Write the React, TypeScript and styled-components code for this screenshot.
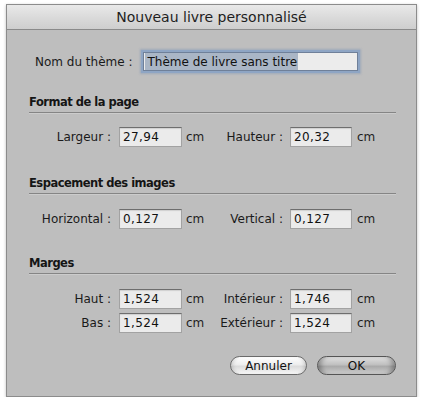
import React from "react";
import styled, { createGlobalStyle } from "styled-components";

const GlobalStyle = createGlobalStyle`
  body {
    margin: 0;
    background: #ffffff;
    font-family: "DejaVu Sans", "Liberation Sans", sans-serif;
  }
`;

const Window = styled.div`
  box-sizing: border-box;
  width: 411px;
  height: 393px;
  margin: 4px 0 0 6px;
  border: 1px solid #8c8c8c;
  background: #bebebe;
  box-shadow: 0 1px 3px rgba(0, 0, 0, 0.25);
  display: flex;
  flex-direction: column;
`;

const TitleBar = styled.div`
  height: 24px;
  border-bottom: 1px solid #8a8a8a;
  background: linear-gradient(#e9e9e9, #d8d8d8 60%, #cecece);
  display: flex;
  align-items: center;
  justify-content: center;
  font-size: 14px;
  color: #1e1e1e;
`;

const Body = styled.div`
  padding: 20px 20px 0 22px;
  display: flex;
  flex-direction: column;
`;

const NameRow = styled.div`
  display: flex;
  align-items: center;
  height: 23px;
  padding-left: 6px;
  gap: 11px;
  font-size: 12px;
  color: #1a1a1a;
`;

const NameField = styled.div`
  box-sizing: border-box;
  width: 215px;
  height: 19px;
  border: 1px solid #6f8099;
  background: #ececec;
  box-shadow: 0 0 0 2px #8ea5c4, 0 0 2px 3px rgba(120, 145, 180, 0.45);
  display: flex;
  align-items: stretch;
  padding-left: 1px;
  font-size: 12px;
  color: #111;
`;

const Selection = styled.span`
  background: #aab6c6;
  padding: 0 1px 0 2px;
  display: flex;
  align-items: center;
`;

const SectionHeader = styled.div<{ $top: number }>`
  margin-top: ${(p) => p.$top}px;
  height: 14px;
  line-height: 14px;
  padding-bottom: 3px;
  border-bottom: 1px solid #858585;
  box-shadow: 0 1px 0 #cccccc;
  font-size: 11.5px;
  font-weight: bold;
  letter-spacing: -0.5px;
  color: #151515;
`;

const FieldGrid = styled.div<{ $top: number }>`
  margin-top: ${(p) => p.$top}px;
  display: grid;
  grid-template-columns: 90px 67px 32px 72px 67px auto;
  grid-auto-rows: 20px;
  row-gap: 4px;
  align-items: center;
  font-size: 12px;
  color: #1a1a1a;
`;

const Label = styled.div<{ $pad: number }>`
  text-align: right;
  padding-right: ${(p) => p.$pad}px;
  white-space: nowrap;
`;

const NumField = styled.div<{ $w: number }>`
  box-sizing: border-box;
  width: ${(p) => p.$w}px;
  height: 20px;
  border: 1px solid #a2a2a2;
  border-top-color: #6e6e6e;
  background: #ebebeb;
  box-shadow: inset 0 1px 1px rgba(0, 0, 0, 0.12);
  padding-left: 3px;
  display: flex;
  align-items: center;
  letter-spacing: 0.4px;
  color: #111;
`;

const Unit = styled.div`
  color: #1e1e1e;
`;

const ButtonRow = styled.div`
  margin-top: 23px;
  display: flex;
  justify-content: flex-end;
  gap: 10px;
`;

const Button = styled.div<{ $primary?: boolean; $w: number }>`
  box-sizing: border-box;
  width: ${(p) => p.$w}px;
  height: 19px;
  border-radius: 10px;
  border: 1px solid ${(p) => (p.$primary ? "#555555" : "#6a6a6a")};
  background: ${(p) =>
    p.$primary
      ? "linear-gradient(#e0e0e0, #c0c0c0 45%, #aaaaaa 55%, #cdcdcd)"
      : "linear-gradient(#ffffff, #ededed 45%, #dcdcdc 55%, #f7f7f7)"};
  box-shadow: ${(p) =>
    p.$primary
      ? "inset 6px 0 5px -3px rgba(0,0,0,0.3), inset -6px 0 5px -3px rgba(0,0,0,0.3)"
      : "inset 4px 0 4px -3px rgba(0,0,0,0.2), inset -4px 0 4px -3px rgba(0,0,0,0.2)"};
  display: flex;
  align-items: center;
  justify-content: center;
  font-size: 12px;
  color: #111;
`;

type Field = { label: string; value: string };

const rows: { left: Field; right: Field }[][] = [
  [{ left: { label: "Largeur :", value: "27,94" }, right: { label: "Hauteur :", value: "20,32" } }],
  [{ left: { label: "Horizontal :", value: "0,127" }, right: { label: "Vertical :", value: "0,127" } }],
  [
    { left: { label: "Haut :", value: "1,524" }, right: { label: "Intérieur :", value: "1,746" } },
    { left: { label: "Bas :", value: "1,524" }, right: { label: "Extérieur :", value: "1,524" } },
  ],
];

const sections = [
  { title: "Format de la page", headTop: 22, gridTop: 14 },
  { title: "Espacement des images", headTop: 29, gridTop: 15 },
  { title: "Marges", headTop: 27, gridTop: 15 },
];

const App = () => {
  return (
    <>
      <GlobalStyle />
      <Window>
        <TitleBar>Nouveau livre personnalisé</TitleBar>
        <Body>
          <NameRow>
            <span>Nom du thème :</span>
            <NameField>
              <Selection>Thème de livre sans titre</Selection>
            </NameField>
          </NameRow>

          {sections.map((s, i) => (
            <React.Fragment key={s.title}>
              <SectionHeader $top={s.headTop}>{s.title}</SectionHeader>
              <FieldGrid $top={s.gridTop}>
                {rows[i].map((r) => (
                  <React.Fragment key={r.left.label}>
                    <Label $pad={8}>{r.left.label}</Label>
                    <NumField $w={63}>{r.left.value}</NumField>
                    <Unit>cm</Unit>
                    <Label $pad={7}>{r.right.label}</Label>
                    <NumField $w={62}>{r.right.value}</NumField>
                    <Unit>cm</Unit>
                  </React.Fragment>
                ))}
              </FieldGrid>
            </React.Fragment>
          ))}

          <ButtonRow>
            <Button $w={77}>Annuler</Button>
            <Button $w={79} $primary>
              OK
            </Button>
          </ButtonRow>
        </Body>
      </Window>
    </>
  );
};

export default App;
